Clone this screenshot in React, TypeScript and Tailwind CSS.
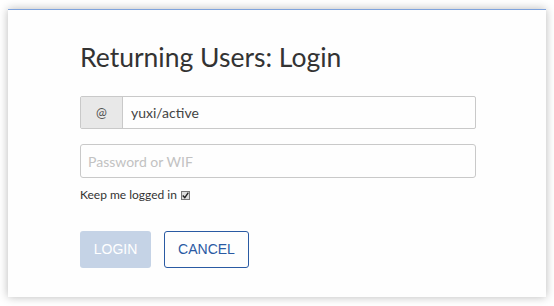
export default function App() {
  return (
    <div className="w-[554px] h-[306px] bg-white pl-2 pt-[9px]">
      <div
        className="w-[538px] h-[288px] bg-[#fefefe] border-t border-[#7ea3dd] shadow-[0_0_9px_rgba(0,0,0,0.28)] pl-[72px] pt-[31px]"
        style={{ fontFamily: "Lato, 'Open Sans', sans-serif" }}
      >
        <h2 className="text-[26.5px] leading-8 text-[#333]">
          Returning Users: Login
        </h2>

        <div className="mt-[23px] w-[396px] flex h-[33px] rounded-[2px] border border-[#c9c9c9]">
          <span className="w-[42px] flex items-center justify-center bg-[#e8e8e8] border-r border-[#c9c9c9] text-[13px] text-[#555]">
            @
          </span>
          <span className="flex items-center pl-[8px] text-[14px] text-[#444]">yuxi/active</span>
        </div>

        <div className="mt-[15px] w-[396px] h-[34px] rounded-[3px] border border-[#c9c9c9] flex items-center pl-[7px] text-[14px] text-[#c2c2c2]">
          Password or WIF
        </div>

        <label className="mt-[9px] flex items-center gap-[4px] text-[12px] text-[#333] h-[16px]">
          Keep me logged in
          <span className="w-[9px] h-[9px] bg-[#ddd] border border-[#777] flex items-center justify-center">
            <svg viewBox="0 0 10 10" className="w-[7px] h-[7px]">
              <path d="M1 5 L4 8 L9 1" fill="none" stroke="#222" strokeWidth="2" />
            </svg>
          </span>
        </label>

        <div
          className="mt-[28px] flex gap-[13px]"
          style={{ fontFamily: "'Liberation Sans', Arial, sans-serif" }}
        >
          <button className="w-[71px] h-[37px] rounded-[3px] bg-[#c5d3e6] text-white text-[14px]">
            LOGIN
          </button>
          <button className="w-[85px] h-[37px] rounded-[3px] border border-[#2a5aa3] text-[#2a5aa3] text-[14px]">
            CANCEL
          </button>
        </div>
      </div>
    </div>
  );
}
